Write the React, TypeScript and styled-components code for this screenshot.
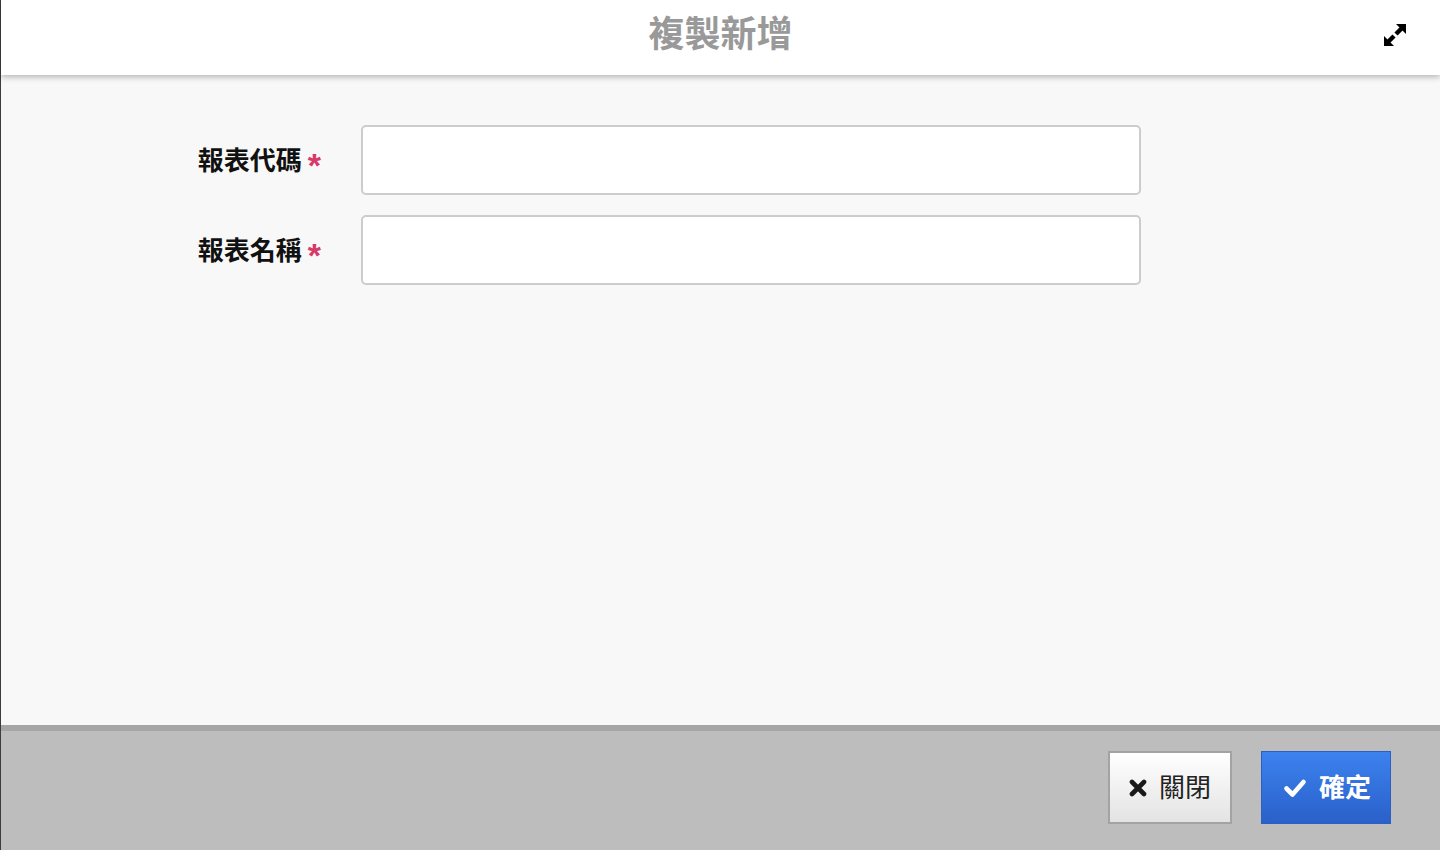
import React from "react";
import styled, { createGlobalStyle } from "styled-components";

const Global = createGlobalStyle`
  html, body { margin: 0; padding: 0; height: 100%; }
  body { font-family: "Noto Sans CJK TC", "Noto Sans", sans-serif; background: #f8f8f8; }
  #root { height: 100%; }
`;

const Page = styled.div`
  height: 100vh;
  display: flex;
  flex-direction: column;
  border-left: 1px solid #3c3c3c;
  box-sizing: border-box;
`;

const Header = styled.header`
  position: relative;
  z-index: 1;
  height: 75px;
  flex: none;
  background: #fff;
  display: flex;
  align-items: center;
  justify-content: center;
  box-shadow: 0 2px 6px rgba(0, 0, 0, 0.28);
`;

const Title = styled.h1`
  margin: 0;
  font-size: 36px;
  font-weight: 700;
  color: #999;
  line-height: 1;
  transform: translateY(-7px);
`;

const ExpandButton = styled.button`
  position: absolute;
  right: 33px;
  top: 23px;
  width: 24px;
  height: 24px;
  background: none;
  border: 0;
  padding: 0;
  display: flex;
  cursor: pointer;
`;

const Body = styled.main`
  flex: 1;
  background: #f8f8f8;
  padding: 50px 0 0 0;
`;

const Form = styled.div`
  display: grid;
  grid-template-columns: 320px 780px;
  column-gap: 40px;
  row-gap: 20px;
  align-items: center;
`;

const Label = styled.label`
  justify-self: end;
  font-size: 26px;
  font-weight: 700;
  color: #111;
  display: flex;
  align-items: center;
  transform: translateY(-2px);
`;

const Required = styled.span`
  color: #d6396a;
  margin-left: 6px;
  font-family: "Liberation Sans", Arial, sans-serif;
  font-size: 34px;
  font-weight: 700;
  transform: translateY(7px);
`;

const Input = styled.input`
  height: 70px;
  box-sizing: border-box;
  border: 2px solid #cccccc;
  border-radius: 5px;
  background: #fff;
  font-size: 24px;
  padding: 0 14px;
  outline: none;
`;

const Footer = styled.footer`
  flex: none;
  height: 125px;
  box-sizing: border-box;
  border-top: 6px solid #a6a6a6;
  background: #bdbdbd;
  display: flex;
  justify-content: flex-end;
  align-items: flex-start;
  gap: 29px;
  padding: 20px 49px 0 0;
`;

const Button = styled.button<{ $primary?: boolean }>`
  height: 73px;
  box-sizing: border-box;
  display: flex;
  align-items: center;
  justify-content: center;
  gap: 12px;
  font-family: "Noto Sans CJK TC", "Noto Sans", sans-serif;
  font-size: 26px;
  cursor: pointer;
  padding: 0;
  ${(p) =>
    p.$primary
      ? `
    width: 130px;
    color: #fff;
    font-weight: 700;
    border: 1px solid #2b5fc4;
    background: linear-gradient(to bottom, #3c82ef, #2a60c9);
    padding-left: 2px;
  `
      : `
    width: 124px;
    color: #222;
    font-weight: 400;
    border: 2px solid #a3a3a3;
    background: linear-gradient(to bottom, #ffffff, #e3e3e3);
  `}
`;

const ButtonText = styled.span`
  transform: translateY(-2px);
`;

const Icon = styled.svg`
  display: block;
  flex: none;
`;

const ExpandIcon = () => (
  <Icon width="24" height="24" viewBox="0 0 24 24">
    <polygon points="23,1 23,11 13,1" fill="#000" />
    <line x1="18.5" y1="5.5" x2="13" y2="11" stroke="#000" strokeWidth="4.5" />
    <polygon points="1,23 1,13 11,23" fill="#000" />
    <line x1="5.5" y1="18.5" x2="11" y2="13" stroke="#000" strokeWidth="4.5" />
  </Icon>
);

const CloseIcon = () => (
  <Icon width="18" height="18" viewBox="0 0 18 18">
    <path
      d="M3 3 L15 15 M15 3 L3 15"
      stroke="#1a1a1a"
      strokeWidth="4.6"
      strokeLinecap="round"
      fill="none"
    />
  </Icon>
);

const CheckIcon = () => (
  <Icon width="24" height="22" viewBox="0 0 24 22">
    <polyline
      points="3.5,11.5 9.5,17.5 20.5,5"
      stroke="#fff"
      strokeWidth="4.6"
      strokeLinecap="round"
      strokeLinejoin="round"
      fill="none"
    />
  </Icon>
);

export default function App() {
  return (
    <>
      <Global />
      <Page>
        <Header>
          <Title>複製新增</Title>
          <ExpandButton aria-label="expand">
            <ExpandIcon />
          </ExpandButton>
        </Header>
        <Body>
          <Form>
            <Label>
              報表代碼<Required>*</Required>
            </Label>
            <Input />
            <Label>
              報表名稱<Required>*</Required>
            </Label>
            <Input />
          </Form>
        </Body>
        <Footer>
          <Button>
            <CloseIcon />
            <ButtonText>關閉</ButtonText>
          </Button>
          <Button $primary>
            <CheckIcon />
            <ButtonText>確定</ButtonText>
          </Button>
        </Footer>
      </Page>
    </>
  );
}
